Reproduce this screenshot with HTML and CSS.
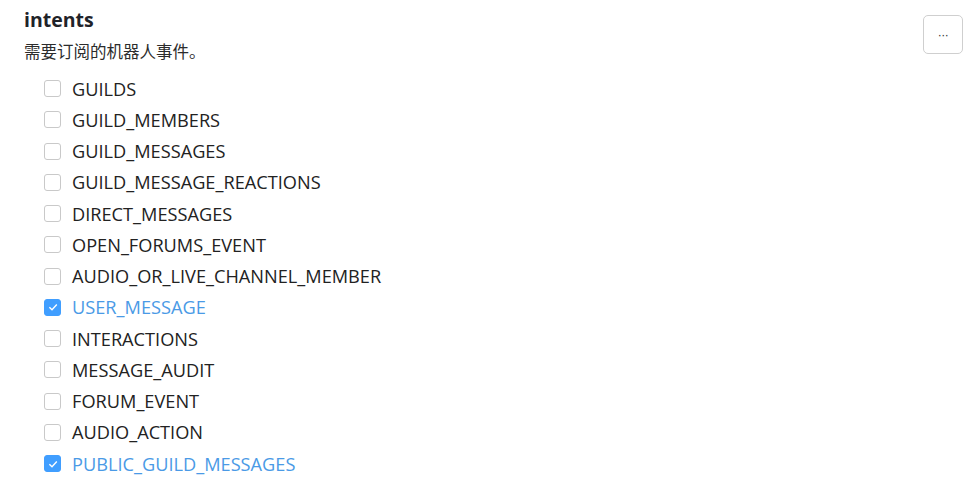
FILE: index.html
```html
<!DOCTYPE html>
<html lang="zh-CN">
<head>
    <meta charset="UTF-8">
    <title>intents</title>
    <link rel="stylesheet" href="styles.css">
</head>
<body>

<div class="field">
    <div class="field-head">
        <div>
            <h3 class="field-title">intents</h3>
            <p class="field-desc">需要订阅的机器人事件。</p>
        </div>
        <button class="more-btn" title="更多">&middot;&middot;&middot;</button>
    </div>

    <ul class="check-list">
        <li><span class="box"></span>GUILDS</li>
        <li><span class="box"></span>GUILD_MEMBERS</li>
        <li><span class="box"></span>GUILD_MESSAGES</li>
        <li><span class="box"></span>GUILD_MESSAGE_REACTIONS</li>
        <li><span class="box"></span>DIRECT_MESSAGES</li>
        <li><span class="box"></span>OPEN_FORUMS_EVENT</li>
        <li><span class="box"></span>AUDIO_OR_LIVE_CHANNEL_MEMBER</li>
        <li class="checked"><span class="box"><svg viewBox="0 0 12 12" width="12" height="12"><path d="M2.4 6.2 L5 8.7 L9.8 3.6" fill="none" stroke="#fff" stroke-width="1.4"/></svg></span>USER_MESSAGE</li>
        <li><span class="box"></span>INTERACTIONS</li>
        <li><span class="box"></span>MESSAGE_AUDIT</li>
        <li><span class="box"></span>FORUM_EVENT</li>
        <li><span class="box"></span>AUDIO_ACTION</li>
        <li class="checked"><span class="box"><svg viewBox="0 0 12 12" width="12" height="12"><path d="M2.4 6.2 L5 8.7 L9.8 3.6" fill="none" stroke="#fff" stroke-width="1.4"/></svg></span>PUBLIC_GUILD_MESSAGES</li>
    </ul>
</div>

</body>
</html>
```

FILE: styles.css
```css
body {
    font-family: "Open Sans", "Noto Sans CJK SC", sans-serif;
    background-color: #ffffff;
    color: #1f2329;
    margin: 0;
    padding: 0;
}
.field {
    padding: 6px 14px 0 24px;
}
.field-head {
    display: flex;
    justify-content: space-between;
    align-items: flex-start;
}
.field-title {
    font-size: 19.5px;
    font-weight: 700;
    margin: 0;
    line-height: 28px;
}
.field-desc {
    font-family: "Noto Sans CJK SC", sans-serif;
    font-size: 16.5px;
    margin: 3px 0 0;
    line-height: 28px;
    color: #2c2c2c;
}
.more-btn {
    width: 40px;
    height: 39px;
    margin-top: 9px;
    border: 1px solid #cfcfcf;
    border-radius: 5px;
    background: #fff;
    color: #333;
    font-size: 12px;
    letter-spacing: -0.5px;
    cursor: pointer;
}
.check-list {
    list-style: none;
    margin: 8px 0 0;
    padding: 0 0 0 20px;
}
.check-list li {
    display: flex;
    align-items: center;
    height: 31.25px;
    font-size: 18.2px;
    color: #222;
}
.box {
    display: inline-flex;
    align-items: center;
    justify-content: center;
    box-sizing: border-box;
    width: 17px;
    height: 17px;
    border: 1px solid #c9c9c9;
    border-radius: 3px;
    margin-right: 11px;
    background: #fff;
}
.check-list li.checked {
    color: #4a9ae6;
}
.checked .box {
    background: #409eff;
    border-color: #409eff;
}
```
